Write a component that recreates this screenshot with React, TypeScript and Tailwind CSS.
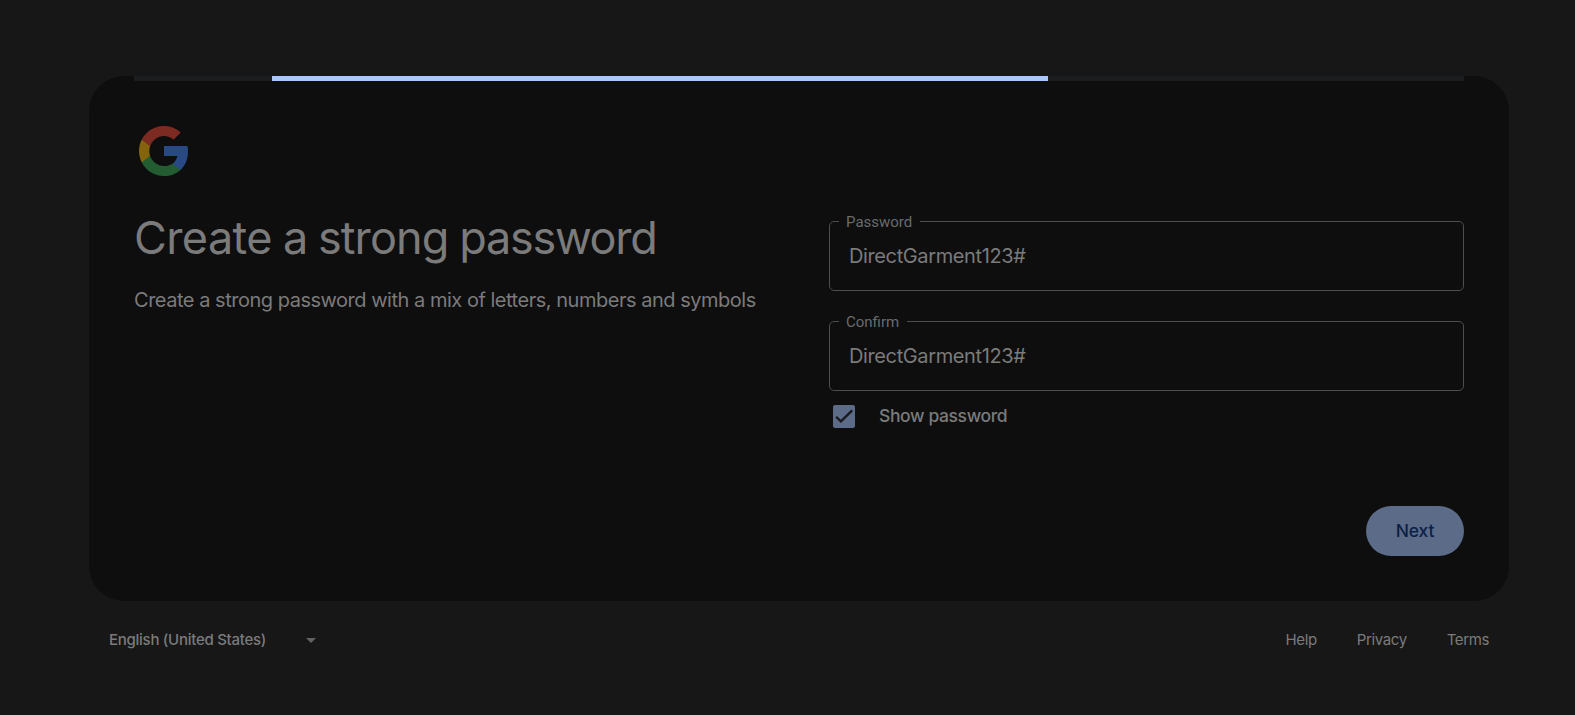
import React from "react";

const SANS = "font-['Inter',sans-serif]";

function GoogleLogo() {
  return (
    <svg width="50" height="60" viewBox="0 0 40 48" aria-hidden="true">
      <path fill="#284984" d="M39.2 24.45c0-1.55-.16-3.04-.43-4.45H20v8h10.73c-.45 2.53-1.86 4.68-4 6.11v5.05h6.5c3.78-3.48 5.97-8.62 5.97-14.71z" />
      <path fill="#235c30" d="M20 44c5.4 0 9.92-1.79 13.24-4.84l-6.5-5.05C24.95 35.3 22.67 36 20 36c-5.19 0-9.59-3.51-11.15-8.23h-6.7v5.2C5.43 39.51 12.18 44 20 44z" />
      <path fill="#84650c" d="M8.85 27.77c-.4-1.19-.62-2.46-.62-3.77s.22-2.58.62-3.77v-5.2h-6.7C.78 17.73 0 20.77 0 24s.78 6.27 2.14 8.97l6.71-5.2z" />
      <path fill="#7d2a22" d="M20 12c2.93 0 5.55 1.01 7.62 2.98l5.76-5.76C29.92 5.98 25.39 4 20 4 12.18 4 5.43 8.49 2.14 15.03l6.7 5.2C10.41 15.51 14.81 12 20 12z" />
    </svg>
  );
}

function Field({ label, value }: { label: string; value: string }) {
  return (
    <fieldset className="-mt-[9px] h-[79px] rounded-[5px] border border-[#4c4d4c] pl-[9px]">
      <legend className="h-[18px] pl-[7px] pr-2 font-['Roboto',sans-serif] text-[15px] leading-[20px] text-[#6a6b6a]">{label}</legend>
      <div className="pl-[10px] pt-[11px] text-xl leading-[30px] tracking-[-0.38px] text-[#7b7b7b]">{value}</div>
    </fieldset>
  );
}

export default function App() {
  return (
    <div className={`${SANS} flex h-[715px] flex-col overflow-hidden bg-[#171717] px-[89px] pr-[66px] pt-[76px] text-[#7b7b7b]`}>
      <main className="flex h-[525px] w-[1420px] flex-col rounded-[35px] bg-[#0e0e0e] px-[45px]">
        <div className="h-[5px] w-full shrink-0 bg-[#1c1d1f]">
          <div className="ml-[138px] h-full w-[776px] bg-[#a8c7fa]" />
        </div>
        <div className="mt-10 shrink-0 pl-[5px]">
          <GoogleLogo />
        </div>
        <div className="flex justify-between">
          <section className="pt-[29px]">
            <h1 className="whitespace-nowrap text-[45px] leading-[55px] tracking-[-1.2px] [word-spacing:-0.5px]">
              <span className="tracking-[-0.6px]">Create</span> a <span className="tracking-[-0.9px]">strong</span>{" "}
              <span className="tracking-[-1.3px]">password</span>
            </h1>
            <p className="mt-5 whitespace-nowrap text-xl leading-[30px] tracking-[-0.48px]">
              Create a strong password with a mix of letters, numbers and symbols
            </p>
          </section>
          <section className="flex w-[635px] flex-col pt-10">
            <Field label="Password" value="DirectGarment123#" />
            <div className="h-[30px]" />
            <Field label="Confirm" value="DirectGarment123#" />
            <label className="mt-[13px] flex items-center pl-1">
              <span className="flex h-[23px] w-[22px] items-center justify-center rounded-[2px] bg-[#5b6b88]">
                <svg width="22" height="22" viewBox="0 0 24 24" fill="none" stroke="#17191d" strokeWidth="2.4">
                  <path d="M3.4 12.8 8.6 17.9 21 5.9" />
                </svg>
              </span>
              <span className="ml-6 text-[17.5px] font-medium leading-6 tracking-[-0.38px]">Show password</span>
            </label>
            <button className="mt-[78px] h-[50px] w-[98px] self-end rounded-full bg-[#5b6b88] text-[17.5px] font-medium tracking-[-0.2px] text-[#0b2148]">
              Next
            </button>
          </section>
        </div>
      </main>
      <footer className="mt-6 flex h-[30px] w-[1420px] items-center justify-between px-5 text-[15px]">
        <div className="flex items-center">
          <span className="w-[197px] font-medium tracking-[-0.27px]">English (United States)</span>
          <svg width="10" height="5" viewBox="0 0 10 5" fill="#606365">
            <path d="M0 0h10L5 5z" />
          </svg>
        </div>
        <nav className="flex gap-10 tracking-[-0.38px]">
          <a>Help</a>
          <a>Privacy</a>
          <a>Terms</a>
        </nav>
      </footer>
    </div>
  );
}
